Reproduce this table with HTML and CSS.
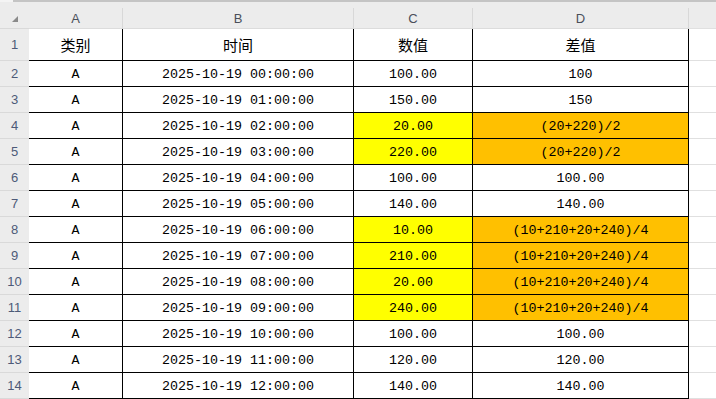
FILE: index.html
```html
<!DOCTYPE html>
<html lang="zh">
<head>
<meta charset="utf-8">
<link rel="stylesheet" href="styles.css">
</head>
<body>
<div class="sheet">
  <div class="topstrip"><div class="topline-gap"></div><div class="topline"></div></div>
  <div class="row colhead">
    <div class="c rh corner"><span class="tri"></span></div>
    <div class="c a">A</div>
    <div class="c b">B</div>
    <div class="c cc">C</div>
    <div class="c d">D</div>
    <div class="c e"></div>
  </div>
  <div class="row first">
    <div class="c rh">1</div>
    <div class="c a cjk">类别</div>
    <div class="c b cjk">时间</div>
    <div class="c cc cjk">数值</div>
    <div class="c d cjk">差值</div>
    <div class="c e"></div>
  </div>
  <div class="row"><div class="c rh">2</div><div class="c a">A</div><div class="c b">2025-10-19 00:00:00</div><div class="c cc">100.00</div><div class="c d">100</div><div class="c e"></div></div>
  <div class="row"><div class="c rh">3</div><div class="c a">A</div><div class="c b">2025-10-19 01:00:00</div><div class="c cc">150.00</div><div class="c d">150</div><div class="c e"></div></div>
  <div class="row"><div class="c rh">4</div><div class="c a">A</div><div class="c b">2025-10-19 02:00:00</div><div class="c cc yel">20.00</div><div class="c d org">(20+220)/2</div><div class="c e"></div></div>
  <div class="row"><div class="c rh">5</div><div class="c a">A</div><div class="c b">2025-10-19 03:00:00</div><div class="c cc yel">220.00</div><div class="c d org">(20+220)/2</div><div class="c e"></div></div>
  <div class="row"><div class="c rh">6</div><div class="c a">A</div><div class="c b">2025-10-19 04:00:00</div><div class="c cc">100.00</div><div class="c d">100.00</div><div class="c e"></div></div>
  <div class="row"><div class="c rh">7</div><div class="c a">A</div><div class="c b">2025-10-19 05:00:00</div><div class="c cc">140.00</div><div class="c d">140.00</div><div class="c e"></div></div>
  <div class="row"><div class="c rh">8</div><div class="c a">A</div><div class="c b">2025-10-19 06:00:00</div><div class="c cc yel">10.00</div><div class="c d org">(10+210+20+240)/4</div><div class="c e"></div></div>
  <div class="row"><div class="c rh">9</div><div class="c a">A</div><div class="c b">2025-10-19 07:00:00</div><div class="c cc yel">210.00</div><div class="c d org">(10+210+20+240)/4</div><div class="c e"></div></div>
  <div class="row"><div class="c rh">10</div><div class="c a">A</div><div class="c b">2025-10-19 08:00:00</div><div class="c cc yel">20.00</div><div class="c d org">(10+210+20+240)/4</div><div class="c e"></div></div>
  <div class="row"><div class="c rh">11</div><div class="c a">A</div><div class="c b">2025-10-19 09:00:00</div><div class="c cc yel">240.00</div><div class="c d org">(10+210+20+240)/4</div><div class="c e"></div></div>
  <div class="row"><div class="c rh">12</div><div class="c a">A</div><div class="c b">2025-10-19 10:00:00</div><div class="c cc">100.00</div><div class="c d">100.00</div><div class="c e"></div></div>
  <div class="row"><div class="c rh">13</div><div class="c a">A</div><div class="c b">2025-10-19 11:00:00</div><div class="c cc">120.00</div><div class="c d">120.00</div><div class="c e"></div></div>
  <div class="row"><div class="c rh">14</div><div class="c a">A</div><div class="c b">2025-10-19 12:00:00</div><div class="c cc">140.00</div><div class="c d">140.00</div><div class="c e"></div></div>
</div>
</body>
</html>
```

FILE: styles.css
```css
* { box-sizing: border-box; }
html, body { margin: 0; padding: 0; background: #ffffff; overflow: hidden; }
body { width: 716px; height: 399px; }
.sheet {
  width: 716px;
  font-family: "Liberation Mono", "Noto Sans CJK SC", monospace;
  font-size: 13.33px;
  color: #000;
}
.topstrip {
  display: flex;
  height: 8px;
  background: #ececec;
}
.topline-gap { width: 13px; height: 2px; background: #f4f4f4; }
.topline { flex: 1; height: 2px; background: #c4c4c4; }
.row {
  display: flex;
  height: 26px;
}
.row.first { height: 32px; }
.row.colhead { height: 21px; }
.c {
  display: flex;
  align-items: center;
  justify-content: center;
  flex: none;
  height: 100%;
  padding-top: 2px;
  white-space: nowrap;
  border-bottom: 1px solid #000;
  border-right: 1px solid #000;
}
.rh {
  width: 29px;
  background: #ececec;
  border-right: none;
  border-bottom: 1px solid #d9d9d9;
  padding-top: 0;
  font-family: "Liberation Sans", "Noto Sans", sans-serif;
  font-size: 13px;
  color: #4d5a78;
}
.a { width: 94px; }
.b { width: 231px; }
.cc { width: 119px; }
.d { width: 216px; }
.e { flex: 1; border-right: none; border-bottom: 1px solid #e0e0e0; }
.colhead .c {
  background: #ececec;
  border-right: 1px solid #d8d8d8;
  border-bottom: 1px solid #dcdcdc;
  padding-top: 0;
  font-family: "Liberation Sans", "Noto Sans", sans-serif;
  font-size: 13px;
  color: #4a4f5a;
}
.colhead .corner { border-right: none; position: relative; }
.colhead .e { border-right: none; }
.tri {
  position: absolute;
  left: 12px;
  top: 8px;
  width: 0;
  height: 0;
  border-left: 6px solid transparent;
  border-bottom: 6px solid #8a8a8a;
}
.first .c { border-top: none; }
.first .cjk { padding-top: 0; }
.cjk {
  font-family: "Noto Sans CJK SC", sans-serif;
  font-size: 15px;
}
.row .rh { border-bottom: 1px solid #d9d9d9; }
.row .e { border-bottom: 1px solid #e0e0e0; }
.yel { background: #ffff00; }
.org { background: #ffc000; }
```
